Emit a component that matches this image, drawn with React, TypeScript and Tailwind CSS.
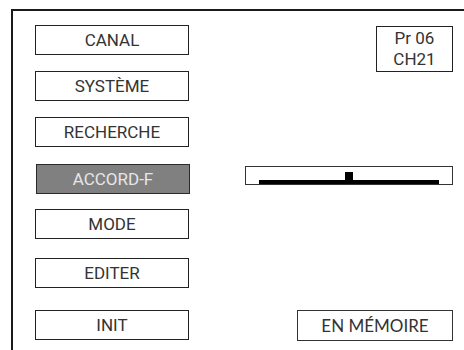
const menu = [
  { label: "CANAL", gap: "mt-0" },
  { label: "SYSTÈME", gap: "mt-[16px]" },
  { label: "RECHERCHE", gap: "mt-[16px]" },
  { label: "ACCORD-F", gap: "mt-[17px]", active: true },
  { label: "MODE", gap: "mt-[15px]" },
  { label: "EDITER", gap: "mt-[19px]" },
  { label: "INIT", gap: "mt-[22px]" },
];

function MenuButton({ label, gap, active }: { label: string; gap: string; active?: boolean }) {
  return (
    <div
      className={`${gap} flex h-[30px] w-[154px] items-center justify-center border ${
        active
          ? "ml-px border-[#2a2a2a] bg-[#808080] text-[#e6e6e6]"
          : "border-[#222] bg-white text-[#333]"
      } text-[17px] leading-none`}
    >
      {label}
    </div>
  );
}

function Tuner() {
  return (
    <div className="flex h-[19px] w-[208px] items-end border border-[#333] px-[13px]">
      <div className="flex h-[12px] flex-1 items-end">
        <div className="h-[4px] flex-1 bg-black" />
        <div className="h-[12px] w-[8px] bg-black" />
        <div className="h-[4px] flex-1 bg-black" />
      </div>
    </div>
  );
}

export default function App() {
  return (
    <div className="h-[350px] w-[464px] overflow-hidden bg-white pl-[11px] pt-[9px] font-['Roboto',sans-serif]">
      <div className="flex h-full border-l-2 border-t-2 border-[#1a1a1a] pl-[22px] pt-[14px] pr-[11px]">
        <div className="flex flex-col">
          {menu.map((item) => (
            <MenuButton key={item.label} {...item} />
          ))}
        </div>
        <div className="ml-auto flex flex-col items-end">
          <div className="mt-px flex h-[46px] w-[77px] flex-col items-center justify-center border border-[#222] text-[17px] leading-[21px] text-[#333]">
            <span>Pr 06</span>
            <span>CH21</span>
          </div>
          <div className="mt-[94px]">
            <Tuner />
          </div>
          <div className="mt-[125px] flex h-[31px] w-[156px] items-center justify-center border border-[#333] font-['Lato',sans-serif] text-[17px] leading-none text-[#333]">
            EN MÉMOIRE
          </div>
        </div>
      </div>
    </div>
  );
}
